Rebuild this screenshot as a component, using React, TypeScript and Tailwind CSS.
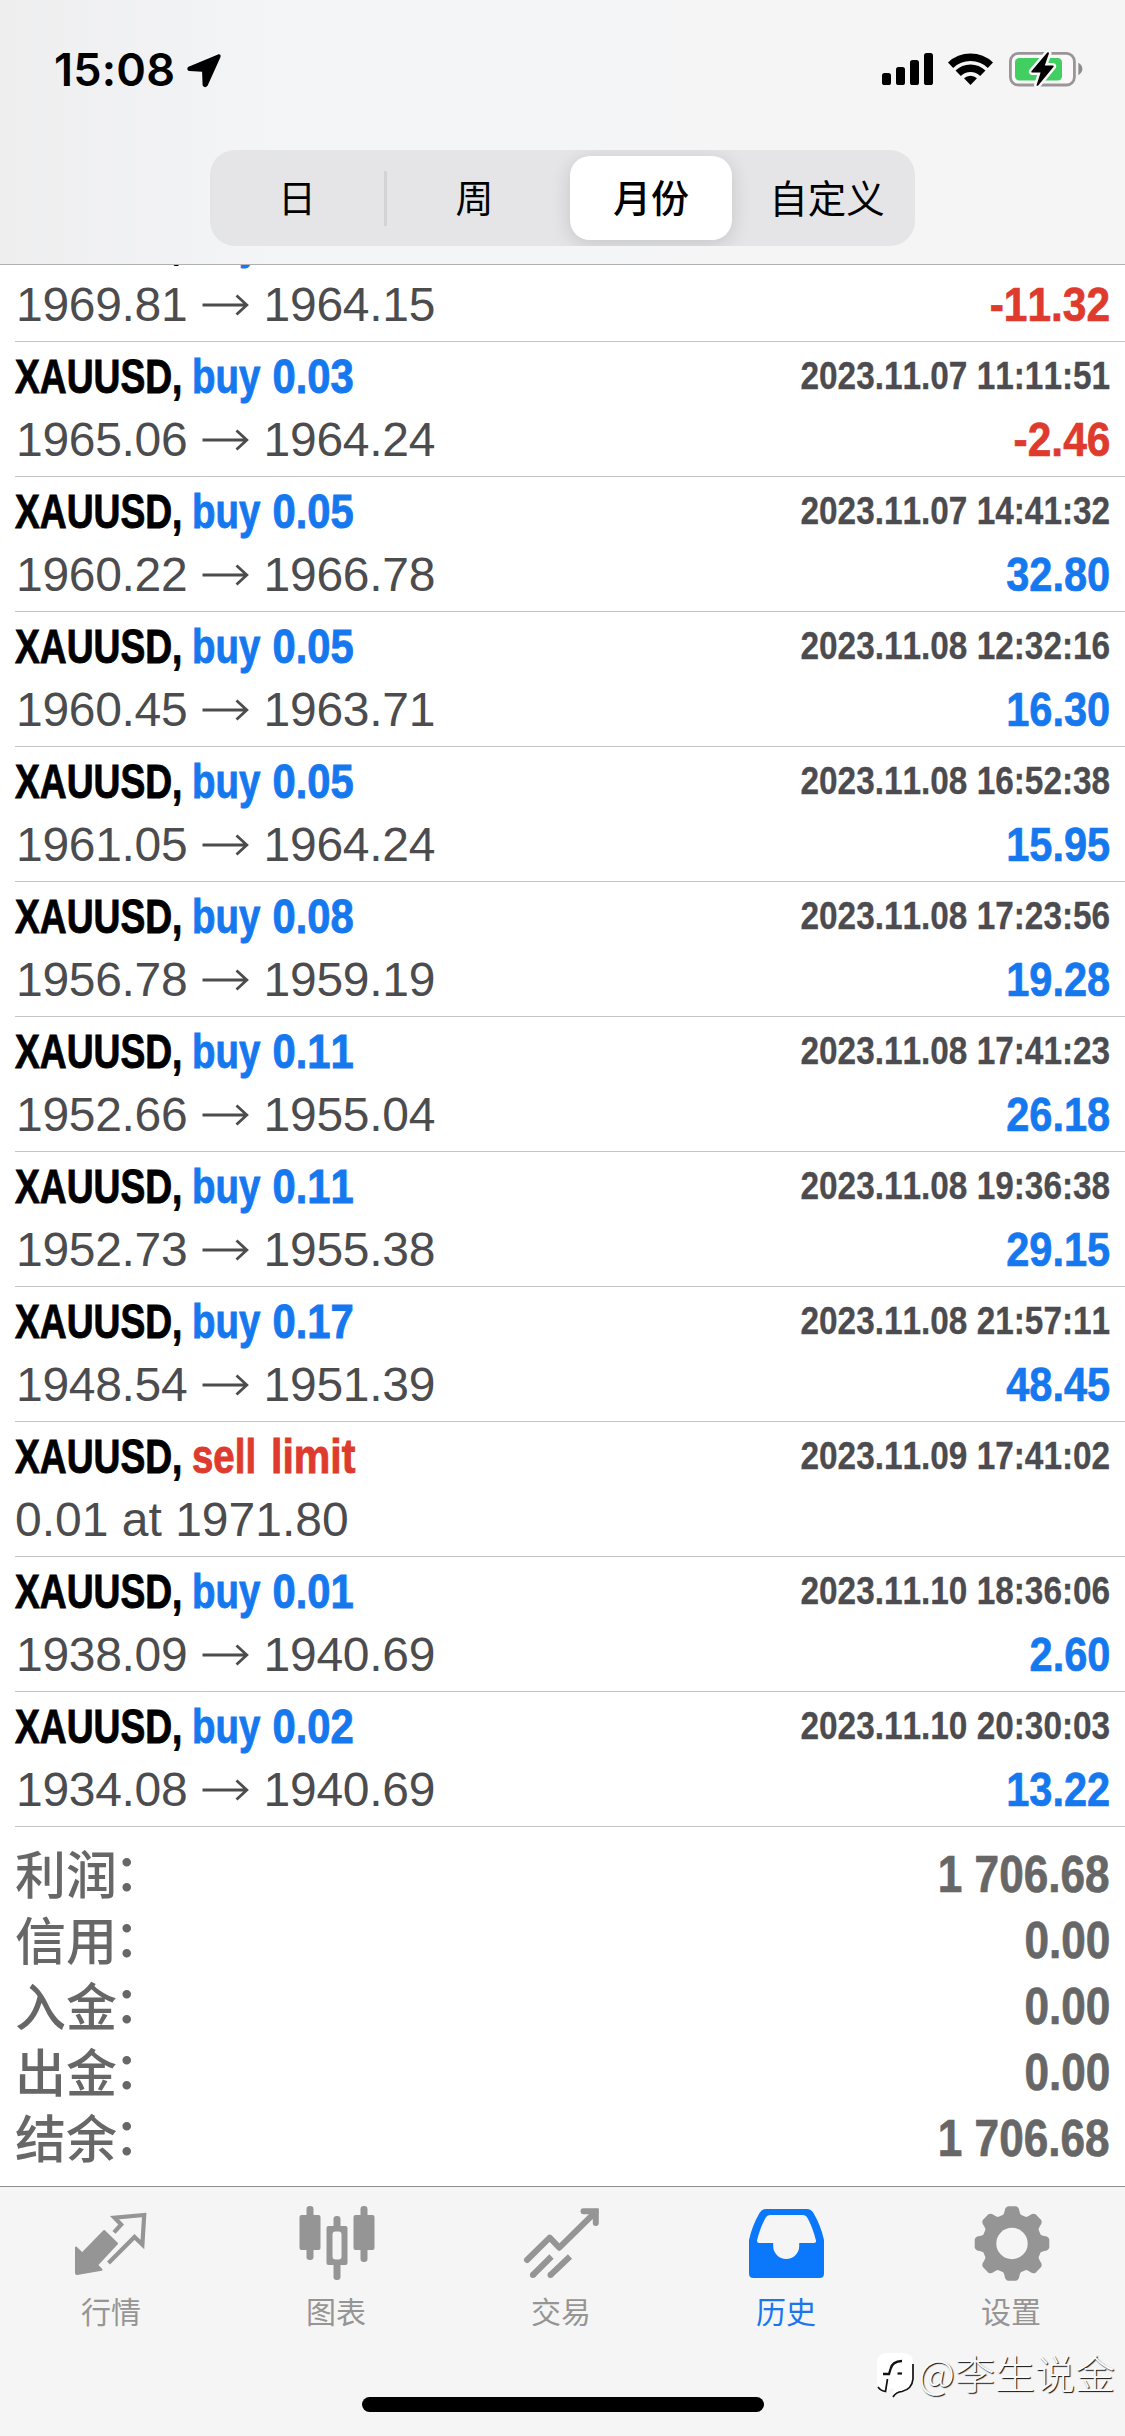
import type { ReactNode } from "react";

type Deal = {
  action: string;
  detail: string;
  time?: string;
  open?: string;
  close?: string;
  note?: string;
  profit?: string;
};

const deals: Deal[] = [
  { action: "buy", detail: "0.02", open: "1969.81", close: "1964.15", profit: "-11.32" },
  { action: "buy", detail: "0.03", time: "2023.11.07 11:11:51", open: "1965.06", close: "1964.24", profit: "-2.46" },
  { action: "buy", detail: "0.05", time: "2023.11.07 14:41:32", open: "1960.22", close: "1966.78", profit: "32.80" },
  { action: "buy", detail: "0.05", time: "2023.11.08 12:32:16", open: "1960.45", close: "1963.71", profit: "16.30" },
  { action: "buy", detail: "0.05", time: "2023.11.08 16:52:38", open: "1961.05", close: "1964.24", profit: "15.95" },
  { action: "buy", detail: "0.08", time: "2023.11.08 17:23:56", open: "1956.78", close: "1959.19", profit: "19.28" },
  { action: "buy", detail: "0.11", time: "2023.11.08 17:41:23", open: "1952.66", close: "1955.04", profit: "26.18" },
  { action: "buy", detail: "0.11", time: "2023.11.08 19:36:38", open: "1952.73", close: "1955.38", profit: "29.15" },
  { action: "buy", detail: "0.17", time: "2023.11.08 21:57:11", open: "1948.54", close: "1951.39", profit: "48.45" },
  { action: "sell", detail: "limit", time: "2023.11.09 17:41:02", note: "0.01 at 1971.80" },
  { action: "buy", detail: "0.01", time: "2023.11.10 18:36:06", open: "1938.09", close: "1940.69", profit: "2.60" },
  { action: "buy", detail: "0.02", time: "2023.11.10 20:30:03", open: "1934.08", close: "1940.69", profit: "13.22" },
];

const totals = [
  ["利润", "1 706.68"],
  ["信用", "0.00"],
  ["入金", "0.00"],
  ["出金", "0.00"],
  ["结余", "1 706.68"],
];

function StatusBar() {
  return (
    <div className="flex h-[138px] items-start justify-between pt-[50px] pr-[41px] pl-[54px]">
      <div className="flex h-[40px] items-center">
        <span className="w-[132px] font-['Inter'] text-[45px] leading-[40px] font-semibold tracking-[0.2px] whitespace-nowrap text-black">
          15:08
        </span>
        <svg width="36" height="38" viewBox="0 0 36 38">
          <path
            d="M32.5 4.5 L3 16.8 Q1.8 18 3.5 18.9 L16.2 19.5 Q17.2 19.7 17.3 21 L17.8 34 Q19 36 20.6 34 L33.2 6 Q34 4.2 32.5 4.5 Z"
            stroke="#000"
            strokeWidth="2.4"
            strokeLinejoin="round"
          />
        </svg>
      </div>
      <div className="flex h-[38px] items-center">
        <svg width="202" height="38" viewBox="882 50 202 38">
          <rect x="882" y="73" width="9" height="12" rx="2.6" />
          <rect x="896" y="67" width="9" height="18" rx="2.6" />
          <rect x="910" y="60" width="9" height="25" rx="2.6" />
          <rect x="924" y="53" width="9" height="32" rx="2.6" />
          <g fill="none" stroke="#000" strokeWidth="7.6">
            <path d="M950.6 65.2 A29 29 0 0 1 990.4 65.2" />
            <path d="M958.2 73.3 A17.6 17.6 0 0 1 982.8 73.3" />
          </g>
          <path d="M970.5 85 L964 78.3 A9.4 9.4 0 0 1 977 78.3 Z" />
          <rect x="1010.4" y="53.4" width="64" height="31.6" rx="8" fill="#faf8f8" stroke="#9a9598" strokeWidth="2.8" />
          <rect x="1015" y="58" width="47" height="22.4" rx="4.2" fill="#42cf62" />
          <path d="M1078.4 62.8 Q1082.4 65.4 1082.4 69 Q1082.4 72.6 1078.4 75.2 Z" fill="#8f8b8d" />
          <path
            d="M1047.3 52.5 L1031.4 71.2 Q1031 72.4 1032 72.4 L1040.6 72.4 L1036.5 85.2 Q1037 86.4 1038.2 85.4 L1053.6 66.8 Q1054 65.6 1053 65.4 L1044.8 65.4 L1049 53.3 Q1048.6 51.6 1047.3 52.5 Z"
            stroke="#faf8f8"
            strokeWidth="5"
            paintOrder="stroke"
            fill="#000"
          />
        </svg>
      </div>
    </div>
  );
}

function PeriodPicker() {
  return (
    <div className="mx-auto mt-[12px] flex h-[96px] w-[705px] items-center overflow-hidden rounded-[25px] bg-[#e5e5e8] font-['Noto_Sans_CJK_SC',sans-serif] text-[38px] leading-[56px] text-black">
      <div className="flex h-[55px] w-[177px] items-center justify-center border-r-[3px] border-[#d3d3d7] pb-[5px]">日</div>
      <div className="flex h-[55px] w-[175px] items-center justify-center pb-[5px]">周</div>
      <div className="mx-[8px] flex h-[84px] w-[162px] items-center justify-center rounded-[20px] bg-white pb-[5px] font-medium shadow-[0_4px_20px_rgba(0,0,0,0.14)]">
        月份
      </div>
      <div className="flex flex-1 items-center justify-center pr-[1px] pb-[5px] text-[38.5px]">自定义</div>
    </div>
  );
}

function Arrow() {
  return (
    <svg className="mr-[15px] ml-[13px] shrink-0" width="47" height="24" viewBox="0 0 47 24">
      <path d="M0.5 12 H44.5 M34.5 2.5 L44.8 12 L34.5 21.5" fill="none" stroke="#4c4c4e" strokeWidth="2.8" />
    </svg>
  );
}

function DealRow({ deal }: { deal: Deal }) {
  const loss = deal.profit?.startsWith("-");
  const actionColor = deal.action === "sell" ? "text-[#de3a2e]" : "text-[#1678ee]";
  const detailScale =
    deal.action === "sell"
      ? "inline-block origin-left scale-x-[0.855]"
      : "inline-block origin-left translate-x-[1.5px] scale-x-[0.87]";
  const profitStyle = loss ? "scale-x-[0.885] text-[#de3a2e]" : "scale-x-[0.865] text-[#1678ee]";
  return (
    <div className="ml-[15px] h-[135px] border-b border-[#c4c4c6] pt-[3px] pr-[15px] text-[48px] leading-[63px] whitespace-nowrap">
      <div className="flex h-[63px] justify-between">
        <div className="flex font-bold [-webkit-text-stroke:0.9px_currentColor]">
          <span className="w-[177px]">
            <span className="inline-block origin-left scale-x-[0.775] text-black">XAUUSD,</span>
          </span>
          <span className={"w-[79px] " + actionColor}>
            <span className="inline-block origin-left scale-x-[0.8]">{deal.action}</span>
          </span>
          <span className={actionColor}>
            <span className={detailScale}>{deal.detail}</span>
          </span>
        </div>
        <span className="origin-right scale-x-[0.855] text-[39px] leading-[61px] font-bold text-[#4c4c50] [-webkit-text-stroke:0.3px_currentColor]">
          {deal.time}
        </span>
      </div>
      <div className="flex h-[63px] justify-between text-[#4c4c4e]">
        {deal.note ? (
          <span>{deal.note}</span>
        ) : (
          <div className="flex items-center">
            <span className="w-[173.500px] pl-[1px] tracking-[-0.3px]">{deal.open}</span>
            <Arrow />
            <span className="tracking-[-0.25px]">{deal.close}</span>
          </div>
        )}
        <span className={"origin-right font-bold [-webkit-text-stroke:0.7px_currentColor] " + profitStyle}>{deal.profit}</span>
      </div>
    </div>
  );
}

function Totals() {
  return (
    <div className="flex h-[359px] flex-col pt-[15px] pr-[15px] pl-[15px] text-[51px] text-[#676767]">
      {totals.map(([label, value]) => (
        <div key={label} className="flex h-[66px] justify-between leading-[66px]">
          <span className="-mt-[3px] font-['Noto_Sans_CJK_SC',sans-serif] font-medium">
            {label}
            <span className="inline-block -translate-x-[3px] -translate-y-[3px]">：</span>
          </span>
          <span className="origin-right scale-x-[0.865] font-bold [-webkit-text-stroke:0.7px_currentColor]">{value}</span>
        </div>
      ))}
    </div>
  );
}

function gearPath(cx: number, cy: number) {
  const pt = (r: number, deg: number) => {
    const a = ((deg - 90) * Math.PI) / 180;
    return (cx + r * Math.cos(a)).toFixed(2) + " " + (cy + r * Math.sin(a)).toFixed(2);
  };
  let d = "M" + pt(30, -17);
  for (let k = 0; k < 8; k++) {
    const a = k * 45;
    d += " Q" + pt(31, a - 15) + " " + pt(33, a - 13);
    d += " Q" + pt(37, a - 11) + " " + pt(37.5, a - 6);
    d += " L" + pt(37.5, a + 6);
    d += " Q" + pt(37, a + 11) + " " + pt(33, a + 13);
    d += " Q" + pt(31, a + 15) + " " + pt(30, a + 17);
    d += " L" + pt(30, a + 28);
  }
  return d + " Z";
}

function Tab({ label, active, children }: { label: string; active?: boolean; children: ReactNode }) {
  return (
    <div className={"flex flex-1 flex-col items-center " + (active ? "text-[#1a75f0]" : "text-[#959595]")}>
      {children}
      <span className="-mt-[2px] pr-[3px] font-['Noto_Sans_CJK_SC',sans-serif] text-[30px] leading-[44px]">{label}</span>
    </div>
  );
}

function TabBar() {
  return (
    <div className="relative flex h-[250px] flex-col justify-between border-t border-[#8e8e91] bg-[#f5f5f5]">
      <div className="flex pt-[13px]">
        <Tab label="行情">
          <svg width="90" height="90" viewBox="68 2200 90 90" fill="currentColor" stroke="currentColor" strokeLinejoin="round">
            <path strokeWidth="2" d="M76 2247.5 L82.2 2253.5 L104.2 2231 L117 2243.5 L97 2265 L101.5 2269.7 L77 2274 Q76 2274 76 2273 Z" />
            <path
              fill="none"
              strokeWidth="4.2"
              strokeLinejoin="miter"
              d="M114 2232.3 L121.2 2224.5 L114.5 2217.6 L144.200 2215 L142.400 2244.500 L134.500 2237 L108.500 2263"
            />
          </svg>
        </Tab>
        <Tab label="图表">
          <svg width="90" height="90" viewBox="292.5 2200 90 90" fill="currentColor">
            <rect x="306" y="2206" width="7" height="54" rx="3.2" />
            <rect x="299" y="2215" width="21" height="35" rx="2" />
            <rect x="360" y="2206" width="7" height="56" rx="3.2" />
            <rect x="353" y="2215" width="21" height="35" rx="2" />
            <rect x="333" y="2216" width="7" height="64" rx="3.2" />
            <rect x="326" y="2226" width="21" height="39" rx="2" />
            <rect x="332" y="2231.5" width="9" height="28" rx="3" fill="#f5f5f5" />
          </svg>
        </Tab>
        <Tab label="交易">
          <svg width="90" height="90" viewBox="518 2200 90 90" fill="none" stroke="currentColor" strokeWidth="6">
            <path strokeLinecap="round" strokeLinejoin="round" d="M527 2260 L549.7 2237.7 L559.3 2247.7 L595.5 2212" />
            <path strokeLinecap="round" d="M583.5 2211.2 H595.8 V2223" />
            <path d="M532.9 2275 L551.5 2256.5 M550.5 2275 L570 2256.5" />
            <circle cx="532.9" cy="2275" r="3" fill="currentColor" stroke="none" />
            <circle cx="550.5" cy="2275" r="3" fill="currentColor" stroke="none" />
          </svg>
        </Tab>
        <Tab label="历史" active>
          <svg width="90" height="90" viewBox="743 2200 90 90">
            <path
              fill="#0b78fb"
              fillRule="evenodd"
              d="M766 2209 H807 Q811 2209 813.5 2213 Q821 2226 824 2240 V2273.5 Q824 2278 819.5 2278 H753.5 Q749 2278 749 2273.5 V2240 Q752 2226 759.5 2213 Q762 2209 766 2209 Z M770.5 2215 Q767 2215 765.5 2218 Q760.5 2227 757 2240.5 Q757 2243 759 2243 H773.2 V2246 A13 13 0 0 0 799.2 2246 V2243 H814 Q816.5 2243 816 2240.5 Q812.5 2227 807.5 2218 Q806 2215 802.5 2215 Z"
            />
          </svg>
        </Tab>
        <Tab label="设置">
          <svg width="90" height="90" viewBox="967.5 2200 90 90">
            <path d={gearPath(1011.5, 2243.5)} fill="currentColor" />
            <circle cx="1011.5" cy="2243.5" r="15.7" fill="#f5f5f5" />
          </svg>
        </Tab>
      </div>
      <div className="mx-auto mb-[24px] h-[15px] w-[402px] rounded-full bg-black" />
      <div className="absolute right-[10px] bottom-[36px] flex items-center">
        <svg width="44" height="50" viewBox="0 0 44 50">
          <path
            d="M12 3 H28 Q38 3 38 13 V29 Q38 39 27 41 Q21 42 18 47 L18.5 40 Q21 37 23 27 H16 L12 42 Q4 40 2 34 V13 Q2 3 12 3 Z"
            fill="#fff"
          />
          <path d="M5 12 H36 V34 L12 40 Z" fill="#fff" />
          <path d="M38 14 V29 Q37 39 27 41.5 Q21 42 18 47 M3 37 Q6 41 10.5 41.500 L12.500 29" fill="none" stroke="#111" strokeWidth="1.7" />
          <path d="M8 24 H14 L15.5 19 Q17 11.5 27 11" fill="none" stroke="#111" strokeWidth="2.3" />
          <path d="M22.5 23.5 H27" stroke="#111" strokeWidth="2.2" />
        </svg>
        <span className="-mt-[6px] font-['Noto_Sans_CJK_SC',sans-serif] text-[40px] leading-[50px] font-light whitespace-nowrap text-[#fafafa] [text-shadow:1px_1px_1px_rgba(0,0,0,0.95)]">
          @李生说金
        </span>
      </div>
    </div>
  );
}

export default function App() {
  return (
    <div className="flex h-[2436px] w-[1125px] flex-col overflow-hidden bg-white font-['Liberation_Sans',Arial,sans-serif] [font-kerning:none]">
      <div className="h-[265px] shrink-0 border-b border-[#b0b0b3] bg-linear-to-r from-[#eeeeef] via-[#f4f5f7] via-25% to-[#f6f5f5]">
        <StatusBar />
        <PeriodPicker />
      </div>
      <div className="h-[1562px] shrink-0 overflow-hidden">
        <div className="-mt-[58px]">
          {deals.map((deal, i) => (
            <DealRow key={i} deal={deal} />
          ))}
        </div>
      </div>
      <Totals />
      <TabBar />
    </div>
  );
}
